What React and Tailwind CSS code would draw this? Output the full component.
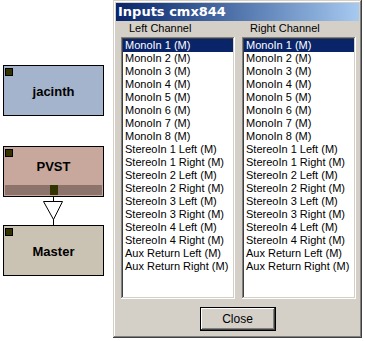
import React from "react";

const items = [
  "MonoIn 1 (M)",
  "MonoIn 2 (M)",
  "MonoIn 3 (M)",
  "MonoIn 4 (M)",
  "MonoIn 5 (M)",
  "MonoIn 6 (M)",
  "MonoIn 7 (M)",
  "MonoIn 8 (M)",
  "StereoIn 1 Left (M)",
  "StereoIn 1 Right (M)",
  "StereoIn 2 Left (M)",
  "StereoIn 2 Right (M)",
  "StereoIn 3 Left (M)",
  "StereoIn 3 Right (M)",
  "StereoIn 4 Left (M)",
  "StereoIn 4 Right (M)",
  "Aux Return Left (M)",
  "Aux Return Right (M)",
];

// little status square in the corner of each node
const Led = ({ className = "" }) => (
  <div className={`w-[8px] h-[8px] bg-[#333300] border border-black ${className}`} />
);

const Node = ({ label, color, top, children }) => (
  <div
    className={`absolute left-[3px] w-[101px] h-[51px] border border-black ${color} ${top} flex flex-col`}
  >
    <Led className="ml-[1px] mt-[2px]" />
    <div className="flex-1 flex items-center justify-center font-bold text-[13px] text-black -mt-[8px]">
      {label}
    </div>
    {children}
  </div>
);

const ChannelList = ({ title }) => (
  <div className="flex flex-col w-[114px]">
    <div className="h-[15px] leading-[13px] pl-[8px] text-[11px] text-black">{title}</div>
    <div className="h-[262px] bg-white p-[2px] shadow-[inset_-1px_-1px_#ffffff,inset_1px_1px_#808080,inset_-2px_-2px_#d4d0c8,inset_2px_2px_#404040]">
      {items.map((item, i) => (
        <div
          key={item}
          className={`h-[13px] leading-[13px] pl-[2px] text-[11px] whitespace-nowrap ${
            i === 0 ? "bg-[#0a246a] text-white" : "text-black"
          }`}
        >
          {item}
        </div>
      ))}
    </div>
  </div>
);

export default function App() {
  return (
    <div className="relative w-[365px] h-[341px] bg-white overflow-hidden font-['Liberation_Sans',Arial,sans-serif]">
      {/* Diagram nodes */}
      <Node label="jacinth" color="bg-[#a4b4cc]" top="top-[65px]" />

      <Node label="PVST" color="bg-[#c8a89c]" top="top-[146px]">
        <div className="mx-[1px] mb-[1px] h-[10px] bg-[#8c746c] flex justify-center">
          <div className="w-[8px] h-[10px] bg-[#333300]" />
        </div>
      </Node>

      <svg className="absolute left-[42px] top-[196px]" width="22" height="30" viewBox="0 0 22 30">
        <line x1="11.5" y1="0" x2="11.5" y2="5" stroke="#000" strokeWidth="1" />
        <polygon points="1.5,5.5 20.5,5.5 11.5,23.5" fill="#fff" stroke="#000" strokeWidth="1" />
        <line x1="11.5" y1="23" x2="11.5" y2="30" stroke="#000" strokeWidth="1" />
      </svg>

      <Node label="Master" color="bg-[#cac2b2]" top="top-[225px]" />

      {/* Inputs window */}
      <div className="absolute left-[113px] top-0 w-[249px] h-[338px] bg-[#d4d0c8] p-[3px] flex flex-col shadow-[inset_-1px_-1px_#404040,inset_1px_1px_#d4d0c8,inset_-2px_-2px_#808080,inset_2px_2px_#ffffff]">
        <div className="h-[18px] shrink-0 bg-linear-to-r from-[#0a246a] to-[#a6caf0] flex items-center pl-[2px] text-white font-bold text-[13px] font-['DejaVu_Sans',sans-serif]">
          Inputs cmx844
        </div>
        <div className="flex gap-[7px] pl-[5px] pt-[1px]">
          <ChannelList title="Left Channel" />
          <ChannelList title="Right Channel" />
        </div>
        <div className="flex justify-center pt-[8px]">
          <button className="w-[76px] h-[24px] border border-black bg-[#d4d0c8] text-[12px] text-black shadow-[inset_-1px_-1px_#404040,inset_1px_1px_#ffffff,inset_-2px_-2px_#808080]">
            Close
          </button>
        </div>
      </div>
    </div>
  );
}
